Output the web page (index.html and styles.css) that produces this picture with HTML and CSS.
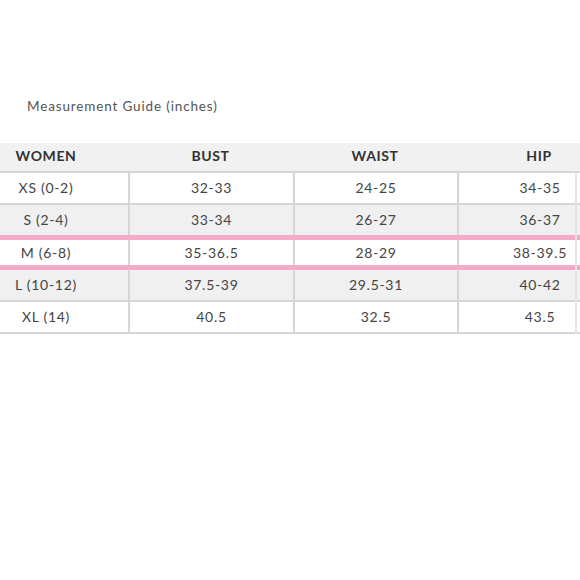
FILE: index.html
```html
<!DOCTYPE html>
<html>
<head>
<meta charset="utf-8">
<link rel="stylesheet" href="styles.css">
</head>
<body>
<div class="page">
  <div class="title">Measurement Guide (inches)</div>
  <div class="table">
    <div class="row head">
      <div class="cell first">WOMEN</div>
      <div class="cell">BUST</div>
      <div class="cell">WAIST</div>
      <div class="cell">HIP</div>
    </div>
    <div class="row">
      <div class="cell first">XS (0-2)</div>
      <div class="cell">32-33</div>
      <div class="cell">24-25</div>
      <div class="cell">34-35</div>
    </div>
    <div class="row alt pink">
      <div class="cell first">S (2-4)</div>
      <div class="cell">33-34</div>
      <div class="cell">26-27</div>
      <div class="cell">36-37</div>
    </div>
    <div class="row short pink">
      <div class="cell first">M (6-8)</div>
      <div class="cell">35-36.5</div>
      <div class="cell">28-29</div>
      <div class="cell">38-39.5</div>
    </div>
    <div class="row alt">
      <div class="cell first">L (10-12)</div>
      <div class="cell">37.5-39</div>
      <div class="cell">29.5-31</div>
      <div class="cell">40-42</div>
    </div>
    <div class="row">
      <div class="cell first">XL (14)</div>
      <div class="cell">40.5</div>
      <div class="cell">32.5</div>
      <div class="cell">43.5</div>
    </div>
    <div class="edge"></div>
  </div>
</div>
</body>
</html>
```
FILE: styles.css
```css
html, body {
  margin: 0;
  padding: 0;
  background: #ffffff;
}
.page {
  width: 580px;
  height: 580px;
  overflow: hidden;
  font-family: "Lato", "DejaVu Sans", sans-serif;
  color: #444;
}
.title {
  margin: 97px 0 0 27px;
  height: 18px;
  line-height: 18px;
  font-size: 13.5px;
  letter-spacing: 0.85px;
  color: #555;
}
.table {
  position: relative;
  margin-top: 28px;
  width: 621px;
}
.row {
  display: grid;
  grid-template-columns: 128px 165px 164px 164px;
  height: 30px;
  border-bottom: 2px solid #d6d6d6;
  background: #fff;
}
.row.alt {
  background: #f0f0f0;
}
.row.short {
  height: 25px;
}
.row.pink {
  border-bottom: 5px solid #f3abc8;
}
.cell {
  display: flex;
  align-items: center;
  justify-content: center;
  border-left: 2px solid #d6d6d6;
  font-size: 14px;
  letter-spacing: 0.7px;
  color: #444;
  padding-bottom: 1px;
}
.cell.first {
  border-left: none;
  padding-right: 36px;
}
.row.head {
  height: 28px;
  background: #f1f1f1;
}
.row.head .cell {
  border-left: none;
  font-weight: bold;
  color: #333;
  letter-spacing: 0.6px;
  padding-bottom: 3px;
}
.edge {
  position: absolute;
  left: 575px;
  top: 30px;
  bottom: 0;
  width: 2px;
  background: #e4e4e4;
}
```
